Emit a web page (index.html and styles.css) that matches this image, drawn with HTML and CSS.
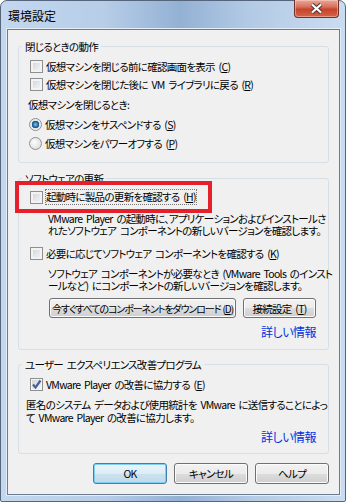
FILE: index.html
```html
<!DOCTYPE html>
<html lang="ja">
  <head>
    <meta charset="UTF-8" />
    <meta name="viewport" content="width=device-width, initial-scale=1.0" />
    <title>環境設定</title>
    <link rel="stylesheet" href="styles.css">
  </head>
  <body>
    <div class="window">
      <div class="titlebar">
        <span class="title">環境設定</span>
        <span class="close">
          <svg width="13" height="11" viewBox="0 0 13 11">
            <path d="M2 1.5 L11 9.5 M11 1.5 L2 9.5" stroke="#4a3a36" stroke-width="4.2" />
            <path d="M2 1.5 L11 9.5 M11 1.5 L2 9.5" stroke="#fff" stroke-width="2.2" />
          </svg>
        </span>
      </div>

      <div class="client">
        <fieldset class="group closing">
          <legend>閉じるときの動作</legend>
          <label class="check"><span class="box"></span>仮想マシンを閉じる前に確認画面を表示 (<u>C</u>)</label>
          <label class="check"><span class="box"></span>仮想マシンを閉じた後に VM ライブラリに戻る (<u>R</u>)</label>
          <p class="caption">仮想マシンを閉じるとき:</p>
          <label class="radio"><span class="dot on"></span>仮想マシンをサスペンドする (<u>S</u>)</label>
          <label class="radio"><span class="dot"></span>仮想マシンをパワーオフする (<u>P</u>)</label>
        </fieldset>

        <fieldset class="group updates">
          <legend>ソフトウェアの更新</legend>
          <label class="check marked">
            <span class="box"></span><span class="focus">起動時に製品の更新を確認する (<u>H</u>)</span>
            <span class="highlight"></span>
          </label>
          <p class="note">VMware Player の起動時に、アプリケーションおよびインストールさ<br>れたソフトウェア コンポーネントの新しいバージョンを確認します。</p>
          <label class="check spaced"><span class="box"></span>必要に応じてソフトウェア コンポーネントを確認する (<u>K</u>)</label>
          <p class="note second">ソフトウェア コンポーネントが必要なとき (VMware Tools のインスト<br>ールなど) にコンポーネントの新しいバージョンを確認します。</p>
          <div class="actions">
            <button class="btn wide">今すぐすべてのコンポーネントをダウンロード (<u>D</u>)</button>
            <button class="btn">接続設定 (<u>T</u>)</button>
          </div>
          <a class="more" href="#">詳しい情報</a>
        </fieldset>

        <fieldset class="group ceip">
          <legend>ユーザー エクスペリエンス改善プログラム</legend>
          <label class="check"><span class="box checked">
            <svg width="11" height="11" viewBox="0 0 11 11"><path d="M2 5.5 L4.5 8.5 L9.5 1.5" fill="none" stroke="#4a5f9a" stroke-width="2.2" /></svg>
          </span>VMware Player の改善に協力する (<u>E</u>)</label>
          <p class="note third">匿名のシステム データおよび使用統計を VMware に送信することによっ<br>て VMware Player の改善に協力します。</p>
          <a class="more" href="#">詳しい情報</a>
        </fieldset>

        <div class="footer">
          <button class="btn default">OK</button>
          <button class="btn">キャンセル</button>
          <button class="btn">ヘルプ</button>
        </div>
      </div>
    </div>
  </body>
</html>
```

FILE: styles.css
```css
body {
  margin: 0;
  font-family: "Noto Sans CJK JP", "Noto Sans", sans-serif;
  font-size: 10.5px;
  letter-spacing: -0.7px;
  word-spacing: 2px;
  font-feature-settings: "palt";
  color: #000;
  white-space: nowrap;
}
.window {
  width: 346px;
  height: 502px;
  box-sizing: border-box;
  display: flex;
  flex-direction: column;
  padding: 0 5px 6px 6px;
  border: 1px solid #55667c;
  border-radius: 7px 7px 2px 2px;
  background: linear-gradient(90deg, #c3d7ee 0%, #b7cde8 30%, #93b1d4 52%, #b3cae5 72%, #cadcf0 100%);
}
.titlebar {
  height: 28px;
  display: flex;
  justify-content: space-between;
  align-items: flex-start;
}
.title {
  margin: 7px 0 0 1px;
  font-size: 12px;
  letter-spacing: 0;
  line-height: 16px;
}
.close {
  width: 45px;
  height: 18px;
  margin-top: -1px;
  margin-right: 1px;
  box-sizing: border-box;
  display: flex;
  justify-content: center;
  align-items: center;
  border: 1px solid #6e3328;
  border-top: none;
  border-radius: 0 0 4px 4px;
  background: linear-gradient(#e9a898 0%, #d8715b 40%, #c8432a 55%, #d4654b 100%);
  box-shadow: inset 0 0 0 1px rgba(255, 220, 210, 0.45);
}
.client {
  flex: 1;
  background: #f0f0f0;
  border: 1px solid #6b7b90;
  box-shadow: 0 0 0 1px #e4edf8;
}
.group {
  margin: 0 10px;
  padding: 0;
  min-width: 0;
  border: 1px solid #d5dfe5;
  border-radius: 3px;
}
.group legend {
  margin-left: 3px;
  padding: 0 3px;
  line-height: 13px;
}
.closing {
  margin-top: 10px;
  padding: 4px 0 10px 0;
}
.updates {
  margin-top: 9px;
  padding: 3px 12px 11px 0;
}
.ceip {
  margin-top: 8px;
  padding: 4px 12px 10px 0;
}
.check,
.radio {
  position: relative;
  display: flex;
  align-items: center;
  height: 18px;
  margin-left: 11px;
}
.radio {
  margin-top: 1px;
  margin-left: 10px;
}
.box {
  flex-shrink: 0;
  width: 13px;
  height: 13px;
  box-sizing: border-box;
  margin-right: 3px;
  display: flex;
  align-items: center;
  justify-content: center;
  border: 1px solid #8e8f8f;
  background: linear-gradient(135deg, #cfd2d7, #f8f8f8);
  box-shadow: inset 0 0 0 2px #f3f3f3;
}
.box.checked {
  box-shadow: inset 0 0 0 1px #f6f6f6;
}
.dot {
  flex-shrink: 0;
  width: 13px;
  height: 13px;
  box-sizing: border-box;
  margin-right: 3px;
  border: 1px solid #8e8f8f;
  border-radius: 50%;
  background: radial-gradient(circle at 40% 40%, #fcfcfc, #d6d6d6);
}
.dot.on {
  background: radial-gradient(circle at 50% 50%, #7fc5ee 0, #2b6ea8 2.5px, #1d4f86 3.5px, #e2e2e2 4px, #f7f7f7 6px);
}
.caption {
  margin: 3px 0 0 9px;
  line-height: 18px;
}
.focus {
  outline: 1px dotted #777;
  outline-offset: 0;
  line-height: 14px;
}
.highlight {
  position: absolute;
  left: -15px;
  top: -7px;
  width: 197px;
  height: 32px;
  box-sizing: border-box;
  border: 4px solid #e5202a;
}
.note {
  margin: 7px 0 0 29px;
  line-height: 12px;
}
.spaced {
  margin-top: 7px;
}
.note.second {
  margin-top: 6px;
}
.note.third {
  margin: 5px 0 0 7px;
  line-height: 13px;
}
.actions {
  display: flex;
  gap: 7px;
  margin: 6px 0 0 30px;
}
.btn {
  width: 74px;
  height: 21px;
  padding: 0;
  font: inherit;
  font-feature-settings: "palt";
  letter-spacing: inherit;
  word-spacing: inherit;
  color: #000;
  border: 1px solid #707070;
  border-radius: 3px;
  background: linear-gradient(#f2f2f2 0%, #ebebeb 50%, #dddddd 50%, #cfcfcf 100%);
  box-shadow: inset 0 0 0 1px #fbfbfb;
}
.actions .btn {
  width: 73px;
  height: 20px;
}
.actions .btn.wide {
  width: 187px;
  font-size: 10px;
  letter-spacing: -1.1px;
  word-spacing: 1px;
}
.btn.default {
  border-color: #3c7fb1;
  background: linear-gradient(#eaf5fb 0%, #dcecf6 50%, #cde2ef 50%, #c0d9e9 100%);
  box-shadow: inset 0 0 0 1px #7fd0f2;
}
.more {
  display: block;
  margin-top: 7px;
  text-align: right;
  font-size: 12px;
  letter-spacing: -0.5px;
  line-height: 13px;
  color: #0033dd;
  text-decoration: none;
}
.ceip .more {
  margin-top: 6px;
}
.footer {
  display: flex;
  justify-content: flex-end;
  gap: 7px;
  margin-top: 9px;
  padding-right: 10px;
}
```
